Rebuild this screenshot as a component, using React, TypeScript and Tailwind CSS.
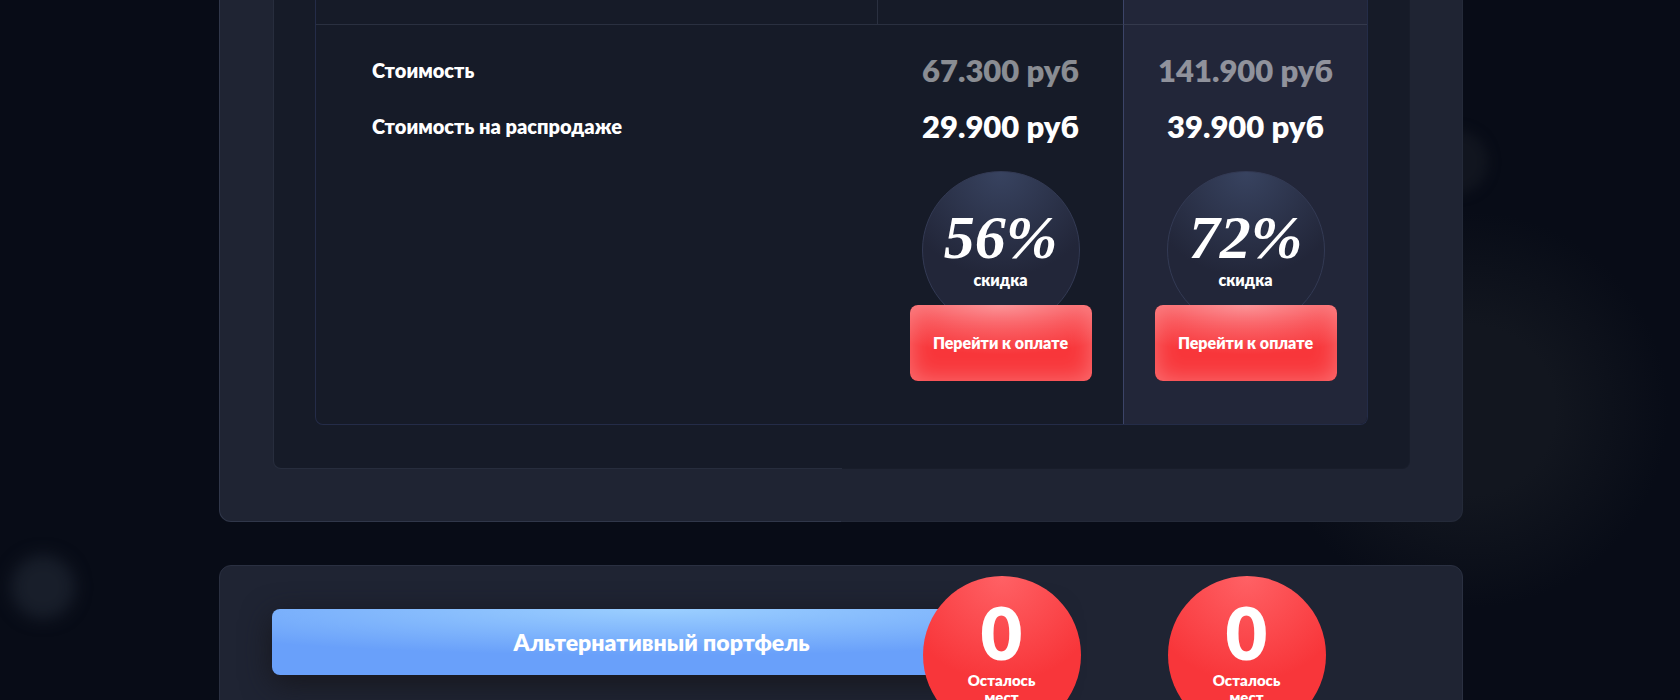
import React from 'react';

type Plan = {
  oldPrice: string;
  price: string;
  discount: string;
  seats: number;
};

const plans: Plan[] = [
  { oldPrice: '67.300 руб', price: '29.900 руб', discount: '56%', seats: 0 },
  { oldPrice: '141.900 руб', price: '39.900 руб', discount: '72%', seats: 0 },
];

// The last plan is the highlighted one
const cellClass = (index: number) =>
  index === plans.length - 1
    ? 'border-l border-[#3c4468] bg-[#222639] text-center'
    : 'text-center';

function DiscountBadge({ value }: { value: string }) {
  return (
    <div className="mx-auto flex size-[158px] flex-col items-center rounded-full border border-[#333a54] bg-[radial-gradient(circle_at_50%_0%,#384360_0%,#222639_60%)] pt-8">
      <span className="font-['Liberation_Serif','Times_New_Roman',serif] text-[62px] leading-[66px] font-bold italic">{value}</span>
      <span className="text-base leading-5 font-extrabold">скидка</span>
    </div>
  );
}

function PayButton() {
  return (
    <button
      type="button"
      className="relative -mt-6 h-[76px] w-[182px] cursor-pointer rounded-lg bg-[#f8363a] bg-[radial-gradient(ellipse_80%_65%_at_50%_0%,#fb8287_0%,#f8363a00_100%)] text-base font-extrabold text-white shadow-[inset_0_0_24px_#ffffff50]"
    >
      Перейти к оплате
    </button>
  );
}

function PriceTable() {
  return (
    <table className="w-full table-fixed border-separate border-spacing-0 overflow-hidden rounded-b-lg border border-t-0 border-[#242c48] text-white">
      <colgroup>
        <col />
        <col className="w-[245px]" />
        <col className="w-[244px]" />
      </colgroup>
      <tbody>
        <tr className="h-[25px]">
          <td className="border-r border-b border-[#2a3040]" />
          <td className="border-b border-[#2a3040]" />
          <td className="border-b border-l border-b-[#34394c] border-l-[#3c4468] bg-[#222639]" />
        </tr>
        <tr>
          <th scope="row" className="pt-[17px] pl-14 text-left text-xl leading-14 font-extrabold">Стоимость</th>
          {plans.map((plan, i) => (
            <td key={plan.price} className={cellClass(i)}>
              <s className="block pt-[17px] text-[31px] leading-14 font-extrabold text-white/50 no-underline">{plan.oldPrice}</s>
            </td>
          ))}
        </tr>
        <tr>
          <th scope="row" className="pl-14 text-left text-xl leading-14 font-extrabold">Стоимость на распродаже</th>
          {plans.map((plan, i) => (
            <td key={plan.price} className={cellClass(i)}>
              <span className="block text-[31px] leading-14 font-extrabold">{plan.price}</span>
            </td>
          ))}
        </tr>
        <tr>
          <td />
          {plans.map((plan, i) => (
            <td key={plan.price} className={cellClass(i)}>
              <div className="pt-[17px] pb-[43px]">
                <DiscountBadge value={plan.discount} />
                <PayButton />
              </div>
            </td>
          ))}
        </tr>
      </tbody>
    </table>
  );
}

function SeatsBadge({ count, className }: { count: number; className: string }) {
  return (
    <div
      className={`relative row-start-1 -mt-[33px] flex size-[158px] flex-col items-center justify-self-center rounded-full bg-[radial-gradient(circle_at_50%_0%,#ff6165_0%,#f8363a_60%)] pt-5 text-center ${className}`}
    >
      <span className="text-[72px] leading-[72px] font-extrabold">{count}</span>
      <span className="mt-1 w-20 text-[15px] leading-[17px] font-extrabold">Осталось мест</span>
    </div>
  );
}

export default function App() {
  return (
    <main className="relative h-screen overflow-hidden bg-[#080c17] pl-0.5 font-['Lato','Noto_Sans',sans-serif] text-white">
      {/* Background glow */}
      <div className="absolute top-[555px] left-[11px] size-16 rounded-full bg-[#181e2a] blur-[8px]" />
      <div className="absolute top-[130px] left-[1424px] size-16 rounded-full bg-[#11151f] blur-[6px]" />
      <div className="absolute top-[210px] left-[1270px] size-[400px] rounded-full bg-[radial-gradient(circle,#12161f_0%,#12161f_30%,#12161f00_70%)]" />

      <div className="relative mx-auto flex max-w-[1244px] flex-col gap-[43px]">
        <section className="rounded-b-xl border border-t-0 border-transparent pr-[52px] pb-[52px] pl-[53px] [background:linear-gradient(#1f2433,#1f2433)_padding-box,linear-gradient(90deg,#30374a_50%,#242a39_50%)_border-box]">
          <div className="rounded-b-lg border border-t-0 border-transparent px-[41px] pb-[43px] [background:linear-gradient(#161b28,#161b28)_padding-box,linear-gradient(90deg,#272d3d_50%,#181d2a_50%)_border-box]">
            <PriceTable />
          </div>
        </section>

        <section className="rounded-xl border border-[#2a3041] bg-[#1f2433] pt-[43px] pr-[52px] pb-14 pl-[53px]">
          <div className="grid grid-cols-[1fr_245px_245px] items-start px-[41px]">
            <h2 className="col-span-2 col-start-1 row-start-1 mr-[73px] -ml-[42px] h-[66px] rounded-lg bg-[#69a0fa] bg-[radial-gradient(ellipse_75%_70%_at_50%_0%,#9bcfff_0%,#69a0fa00_100%)] text-center text-[23px] leading-[66px] font-extrabold shadow-[0_8px_30px_#17171d]">
              Альтернативный портфель
            </h2>
            <SeatsBadge count={plans[0].seats} className="col-start-2" />
            <SeatsBadge count={plans[1].seats} className="col-start-3" />
          </div>
        </section>
      </div>
    </main>
  );
}
